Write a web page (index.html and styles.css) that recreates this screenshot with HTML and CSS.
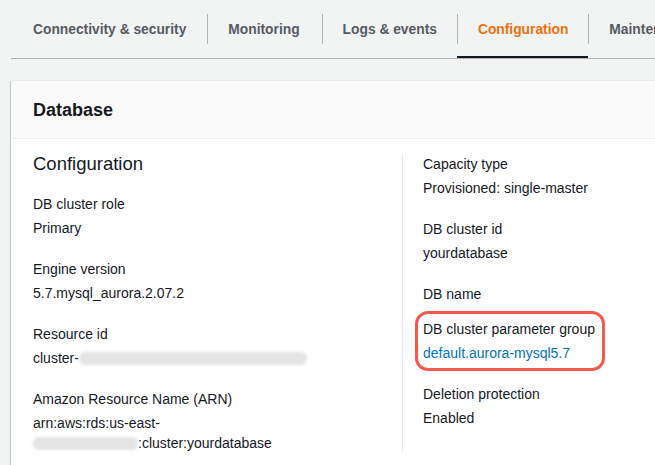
FILE: index.html
```html
<!DOCTYPE html>
<html lang="en">
<head>
<meta charset="utf-8">
<title>Database configuration</title>
<link rel="stylesheet" href="styles.css">
</head>
<body>
<div class="page">
  <nav class="tabs">
    <div class="tab tab--first"><span class="tab-label">Connectivity &amp; security</span></div>
    <div class="tab tab--wide"><span class="tab-label">Monitoring</span></div>
    <div class="tab"><span class="tab-label">Logs &amp; events</span></div>
    <div class="tab tab--active"><span class="tab-label">Configuration</span></div>
    <div class="tab"><span class="tab-label">Maintenance &amp; backups</span></div>
  </nav>

  <section class="panel">
    <header class="panel-header">
      <h2 class="panel-title">Database</h2>
    </header>
    <div class="panel-body">
      <div class="col col--left">
        <h3 class="col-title">Configuration</h3>
        <div class="field">
          <div class="label">DB cluster role</div>
          <div class="value">Primary</div>
        </div>
        <div class="field">
          <div class="label">Engine version</div>
          <div class="value">5.7.mysql_aurora.2.07.2</div>
        </div>
        <div class="field">
          <div class="label">Resource id</div>
          <div class="value">cluster-<span class="redacted redacted--long"></span></div>
        </div>
        <div class="field">
          <div class="label">Amazon Resource Name (ARN)</div>
          <div class="value">arn:aws:rds:us-east-<br><span class="redacted redacted--short"></span>:cluster:yourdatabase</div>
        </div>
      </div>
      <div class="col col--right">
        <div class="field">
          <div class="label">Capacity type</div>
          <div class="value">Provisioned: single-master</div>
        </div>
        <div class="field">
          <div class="label">DB cluster id</div>
          <div class="value">yourdatabase</div>
        </div>
        <div class="field field--empty">
          <div class="label">DB name</div>
        </div>
        <div class="field field--highlight">
          <div class="label">DB cluster parameter group</div>
          <div class="value"><a class="link" href="#">default.aurora-mysql5.7</a></div>
        </div>
        <div class="field">
          <div class="label">Deletion protection</div>
          <div class="value">Enabled</div>
        </div>
      </div>
    </div>
  </section>
</div>
</body>
</html>
```

FILE: styles.css
```css
* {
  box-sizing: border-box;
}

html, body {
  margin: 0;
  padding: 0;
  background: #f2f3f3;
  overflow: hidden;
}

body {
  font-family: "Liberation Sans", Arial, sans-serif;
  font-size: 14px;
  color: #16191f;
  width: 655px;
  height: 465px;
}

.page {
  padding-left: 11px;
}

/* Tabs */
.tabs {
  display: flex;
  white-space: nowrap;
  border-bottom: 1px solid #aab7b8;
  width: 900px;
}

.tab {
  flex: none;
  padding-top: 14px;
  padding-bottom: 12px;
  border-bottom: 2px solid transparent;
}

.tab-label {
  display: block;
  font-size: 13.8px;
  line-height: 28px;
  padding: 2px 20px 0;
  border-left: 1px solid #aab7b8;
  font-weight: bold;
  color: #545b64;
}

.tab--first .tab-label {
  border-left: none;
  padding-left: 22px;
  padding-right: 21px;
}

.tab--wide .tab-label {
  padding-right: 22px;
}

.tab--active {
  border-bottom-color: #16191f;
}

.tab--active .tab-label {
  color: #ec7211;
}

/* Panel */
.panel {
  margin-top: 21px;
  width: 820px;
  background: #ffffff;
  border-top: 1px solid #eaeded;
  box-shadow: 0 1px 1px 0 rgba(0, 28, 36, 0.3),
              1px 1px 1px 0 rgba(0, 28, 36, 0.15),
              -1px 1px 1px 0 rgba(0, 28, 36, 0.15);
}

.panel-header {
  background: #fafafa;
  border-bottom: 1px solid #eaeded;
  padding: 18px 22px 17px;
}

.panel-title {
  margin: 0;
  font-size: 18px;
  line-height: 22px;
  font-weight: bold;
  color: #16191f;
}

.panel-body {
  display: flex;
  padding: 15px 22px 40px;
}

.col--left {
  flex: 0 0 349px;
  margin-right: 20px;
}

.col--right {
  flex: 1;
  border-left: 1px solid #eaeded;
  padding-left: 20px;
}

.col-title {
  margin: 0 0 20px;
  font-size: 18.5px;
  line-height: 20px;
  font-weight: normal;
  color: #16191f;
}

.field {
  margin-bottom: 21px;
  line-height: 20px;
}

.field:last-child {
  margin-bottom: 0;
}

.field--empty {
  margin-bottom: 15px;
}

.label {
  color: #16191f;
}

.value {
  margin-top: 4px;
  color: #16191f;
}

.link {
  color: #0073bb;
  text-decoration: none;
}

.field--highlight {
  width: fit-content;
  padding-right: 2px;
  border-radius: 5px;
  outline: 3px solid #f25b4d;
  outline-offset: 5px;
}

.redacted {
  display: inline-block;
  vertical-align: middle;
  height: 13px;
  background: #e4e4e4;
  border-radius: 6px;
  filter: blur(1.5px);
}

.redacted--long {
  width: 228px;
  margin-top: -2px;
}

.redacted--short {
  width: 105px;
  margin-top: -2px;
}
```
